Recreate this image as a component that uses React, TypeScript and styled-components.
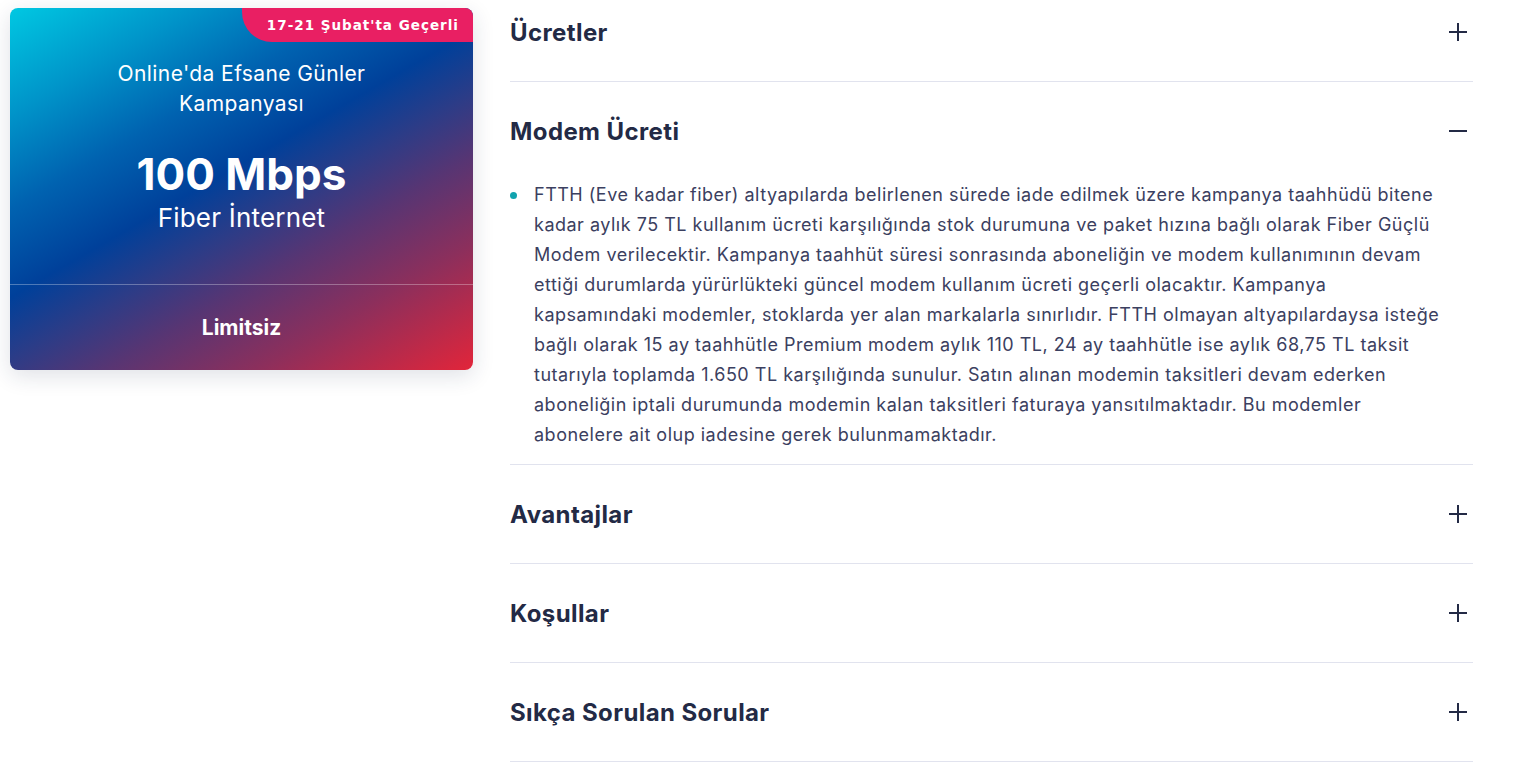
import React from "react";
import styled, { createGlobalStyle } from "styled-components";

const Global = createGlobalStyle`
  html, body { margin: 0; padding: 0; background: #fff; }
  body { font-family: Inter, "Open Sans", sans-serif; overflow: hidden; }
  * { box-sizing: border-box; }
`;

const Page = styled.div`
  display: flex;
  align-items: flex-start;
  padding: 8px 0 0 10px;
  gap: 37px;
  width: 1524px;
  height: 784px;
`;

const Card = styled.div`
  position: relative;
  width: 463px;
  height: 362px;
  border-radius: 8px;
  overflow: hidden;
  color: #fff;
  background: linear-gradient(
    150deg,
    #00c8e2 0%,
    #0094c9 17%,
    #0062b0 32%,
    #00409a 46%,
    #2c3c87 56%,
    #573573 66%,
    #8c2f5c 80%,
    #e2253a 100%
  );
  box-shadow: 0 6px 22px rgba(30, 40, 80, 0.14);
  display: flex;
  flex-direction: column;
  text-align: center;
`;

const Badge = styled.div`
  position: absolute;
  top: 0;
  right: 0;
  width: 231px;
  height: 34px;
  background: #e91f63;
  border-bottom-left-radius: 30px;
  display: flex;
  align-items: center;
  justify-content: flex-end;
  padding-right: 14px;
  font-family: "DejaVu Sans", sans-serif;
  font-weight: 700;
  font-size: 13.5px;
  letter-spacing: 1px;
`;

const CardTop = styled.div`
  height: 277px;
  padding-top: 51px;
  border-bottom: 1px solid rgba(255, 255, 255, 0.3);
  display: flex;
  flex-direction: column;
  align-items: center;
`;

const Campaign = styled.div`
  font-size: 21px;
  line-height: 30px;
  width: 320px;
  letter-spacing: 0.4px;
`;

const Speed = styled.div`
  margin-top: 28px;
  font-size: 44px;
  font-weight: 700;
  line-height: 54px;
`;

const Product = styled.div`
  font-size: 26px;
  line-height: 34px;
  margin-top: 0;
  letter-spacing: 0.2px;
`;

const CardBottom = styled.div`
  flex: 1;
  display: flex;
  align-items: center;
  justify-content: center;
  font-size: 21px;
  font-weight: 700;
  padding-bottom: 1px;
`;

const Accordion = styled.div`
  width: 963px;
  margin-top: -25px;
`;

const Item = styled.div`
  border-bottom: 1px solid #e1e3ee;
`;

const Header = styled.div`
  height: 98px;
  display: flex;
  align-items: center;
  justify-content: space-between;
  padding-right: 5px;
`;

const Title = styled.h3`
  margin: 0;
  font-size: 24px;
  font-weight: 700;
  color: #232a45;
  letter-spacing: 0.4px;
`;

const Body = styled.ul`
  margin: 0;
  padding: 0 0 14px 24px;
  list-style: none;
`;

const Bullet = styled.li`
  position: relative;
  font-size: 18px;
  line-height: 30px;
  letter-spacing: 0.5px;
  white-space: nowrap;
  color: #3b4060;
  &::before {
    content: "";
    position: absolute;
    left: -24px;
    top: 12px;
    width: 7px;
    height: 7px;
    border-radius: 50%;
    background: #11a3ae;
  }
`;

const Icon = ({ open }: { open: boolean }) => (
  <svg width="20" height="20" viewBox="0 0 20 20" fill="none" stroke="#232a45" strokeWidth="2">
    <line x1="1" y1="10" x2="19" y2="10" />
    {!open && <line x1="10" y1="1" x2="10" y2="19" />}
  </svg>
);

const lines = [
  "FTTH (Eve kadar fiber) altyapılarda belirlenen sürede iade edilmek üzere kampanya taahhüdü bitene",
  "kadar aylık 75 TL kullanım ücreti karşılığında stok durumuna ve paket hızına bağlı olarak Fiber Güçlü",
  "Modem verilecektir. Kampanya taahhüt süresi sonrasında aboneliğin ve modem kullanımının devam",
  "ettiği durumlarda yürürlükteki güncel modem kullanım ücreti geçerli olacaktır. Kampanya",
  "kapsamındaki modemler, stoklarda yer alan markalarla sınırlıdır. FTTH olmayan altyapılardaysa isteğe",
  "bağlı olarak 15 ay taahhütle Premium modem aylık 110 TL, 24 ay taahhütle ise aylık 68,75 TL taksit",
  "tutarıyla toplamda 1.650 TL karşılığında sunulur. Satın alınan modemin taksitleri devam ederken",
  "aboneliğin iptali durumunda modemin kalan taksitleri faturaya yansıtılmaktadır. Bu modemler",
  "abonelere ait olup iadesine gerek bulunmamaktadır.",
];

const items = [
  { title: "Ücretler", open: false },
  { title: "Modem Ücreti", open: true },
  { title: "Avantajlar", open: false },
  { title: "Koşullar", open: false },
  { title: "Sıkça Sorulan Sorular", open: false },
];

export default function App() {
  return (
    <>
      <Global />
      <Page>
        <Card>
          <Badge>17-21 Şubat'ta Geçerli</Badge>
          <CardTop>
            <Campaign>Online'da Efsane Günler Kampanyası</Campaign>
            <Speed>100 Mbps</Speed>
            <Product>Fiber İnternet</Product>
          </CardTop>
          <CardBottom>Limitsiz</CardBottom>
        </Card>
        <Accordion>
          {items.map((it) => (
            <Item key={it.title}>
              <Header>
                <Title>{it.title}</Title>
                <Icon open={it.open} />
              </Header>
              {it.open && (
                <Body>
                  <Bullet>
                    {lines.map((l, i) => (
                      <React.Fragment key={i}>
                        {l}
                        {i < lines.length - 1 && <br />}
                      </React.Fragment>
                    ))}
                  </Bullet>
                </Body>
              )}
            </Item>
          ))}
        </Accordion>
      </Page>
    </>
  );
}
